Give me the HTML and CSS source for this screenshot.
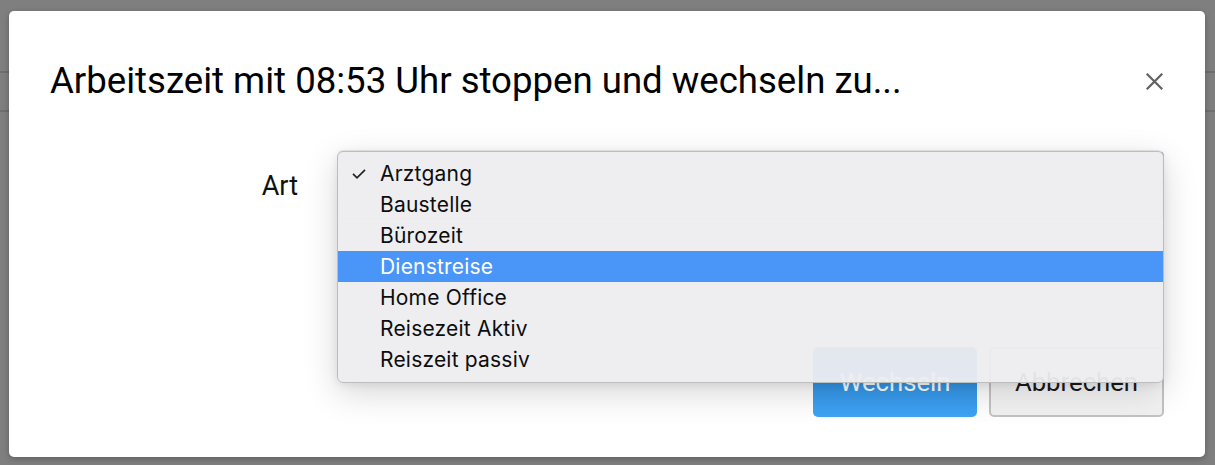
FILE: index.html
```html
<!DOCTYPE html>
<html lang="de">
<head>
<meta charset="utf-8">
<title>Arbeitszeit wechseln</title>
<link rel="stylesheet" href="styles.css">
</head>
<body>
<div class="page">
  <div class="page-bar"></div>
  <div class="page-sub"></div>
</div>

<div class="modal">
  <div class="modal-header">
    <h4 class="modal-title">Arbeitszeit mit 08:53 Uhr stoppen und wechseln zu...</h4>
    <button class="close" type="button" aria-label="Schließen">
      <svg width="17" height="17" viewBox="0 0 17 17"><path d="M1.5 1.5 L15.5 15.5 M15.5 1.5 L1.5 15.5" stroke="#616161" stroke-width="2.2" stroke-linecap="square" fill="none"/></svg>
    </button>
  </div>
  <div class="modal-body">
    <div class="form-row">
      <label class="form-label">Art</label>
      <div class="select-wrap">
        <div class="select"></div>
        <ul class="popup">
          <li class="opt checked"><span class="check"><svg width="14" height="10" viewBox="0 0 14 10"><path d="M1 4.8 L5 8.8 L13 0.8" stroke="#222" stroke-width="1.7" fill="none"/></svg></span>Arztgang</li>
          <li class="opt">Baustelle</li>
          <li class="opt">Bürozeit</li>
          <li class="opt active">Dienstreise</li>
          <li class="opt">Home Office</li>
          <li class="opt">Reisezeit Aktiv</li>
          <li class="opt">Reiszeit passiv</li>
        </ul>
      </div>
    </div>
    <div class="actions">
      <button class="btn btn-primary" type="button">Wechseln</button>
      <button class="btn btn-default" type="button">Abbrechen</button>
    </div>
  </div>
</div>
</body>
</html>
```

FILE: styles.css
```css
html, body {
  margin: 0;
  padding: 0;
}
body {
  width: 1215px;
  height: 465px;
  background: #7f7f7f;
  overflow: hidden;
  position: relative;
  font-family: Roboto, "Liberation Sans", Arial, sans-serif;
}
.page-bar {
  height: 71px;
  border-bottom: 2px solid #6f6f6f;
}
.page-sub {
  height: 37px;
  border-bottom: 2px solid #6f6f6f;
}
.modal {
  position: absolute;
  left: 9px;
  top: 11px;
  width: 1196px;
  height: 446px;
  background: #fff;
  border-radius: 5px;
  box-shadow: 0 2px 6px rgba(0,0,0,0.25);
  box-sizing: border-box;
  padding: 0 41px;
}
.modal-header {
  display: flex;
  align-items: center;
  justify-content: space-between;
  padding-top: 48px;
}
.modal-title {
  margin: 0;
  font-weight: 400;
  font-size: 36.6px;
  line-height: 44px;
  color: #000;
}
.close {
  border: 0;
  background: none;
  padding: 0;
  margin: 0 1px 0 0;
  width: 17px;
  height: 17px;
  display: flex;
}
.modal-body {
  padding-top: 47px;
}
.form-row {
  display: grid;
  grid-template-columns: 248px 1fr;
  column-gap: 39px;
  align-items: center;
}
.form-label {
  text-align: right;
  font-size: 27px;
  color: #111;
  padding-top: 2px;
}
.select-wrap {
  position: relative;
  height: 70px;
}
.select {
  height: 70px;
  box-sizing: border-box;
  border: 2px solid #ececec;
  border-right-color: #a5a5a5;
  border-radius: 6px;
  background: #fff;
}
.popup {
  position: absolute;
  top: 1px;
  left: 0;
  right: 0;
  margin: 0;
  padding: 6px 0 7px;
  list-style: none;
  background: rgba(237, 237, 240, 0.95);
  border: 1px solid #bdbdbd;
  border-radius: 6px;
  box-shadow: 0 10px 34px rgba(0,0,0,0.16), 0 2px 8px rgba(0,0,0,0.08);
  z-index: 5;
  font-family: Inter, "Noto Sans", sans-serif;
}
.opt {
  height: 31px;
  line-height: 31px;
  padding-left: 42px;
  font-size: 21px;
  font-weight: 400;
  color: #0d0d0d;
  position: relative;
  letter-spacing: 0.2px;
}
.opt.active {
  background: #4a95f8;
  color: #fff;
}
.check {
  position: absolute;
  left: 14px;
  top: 11px;
  display: flex;
}
.actions {
  display: flex;
  justify-content: flex-end;
  gap: 12px;
  margin-top: 127px;
}
.btn {
  height: 70px;
  box-sizing: border-box;
  border-radius: 5px;
  font-family: Roboto, "Liberation Sans", Arial, sans-serif;
  font-size: 25.7px;
  padding: 0;
}
.btn-primary {
  width: 164px;
  border: 0;
  color: #fff;
  background: linear-gradient(#2a85d6, #3ea4f6);
}
.btn-default {
  width: 175px;
  border: 2px solid #c3c3c3;
  color: #1a1a1a;
  background: linear-gradient(#ffffff, #f1f1f1);
}
```
